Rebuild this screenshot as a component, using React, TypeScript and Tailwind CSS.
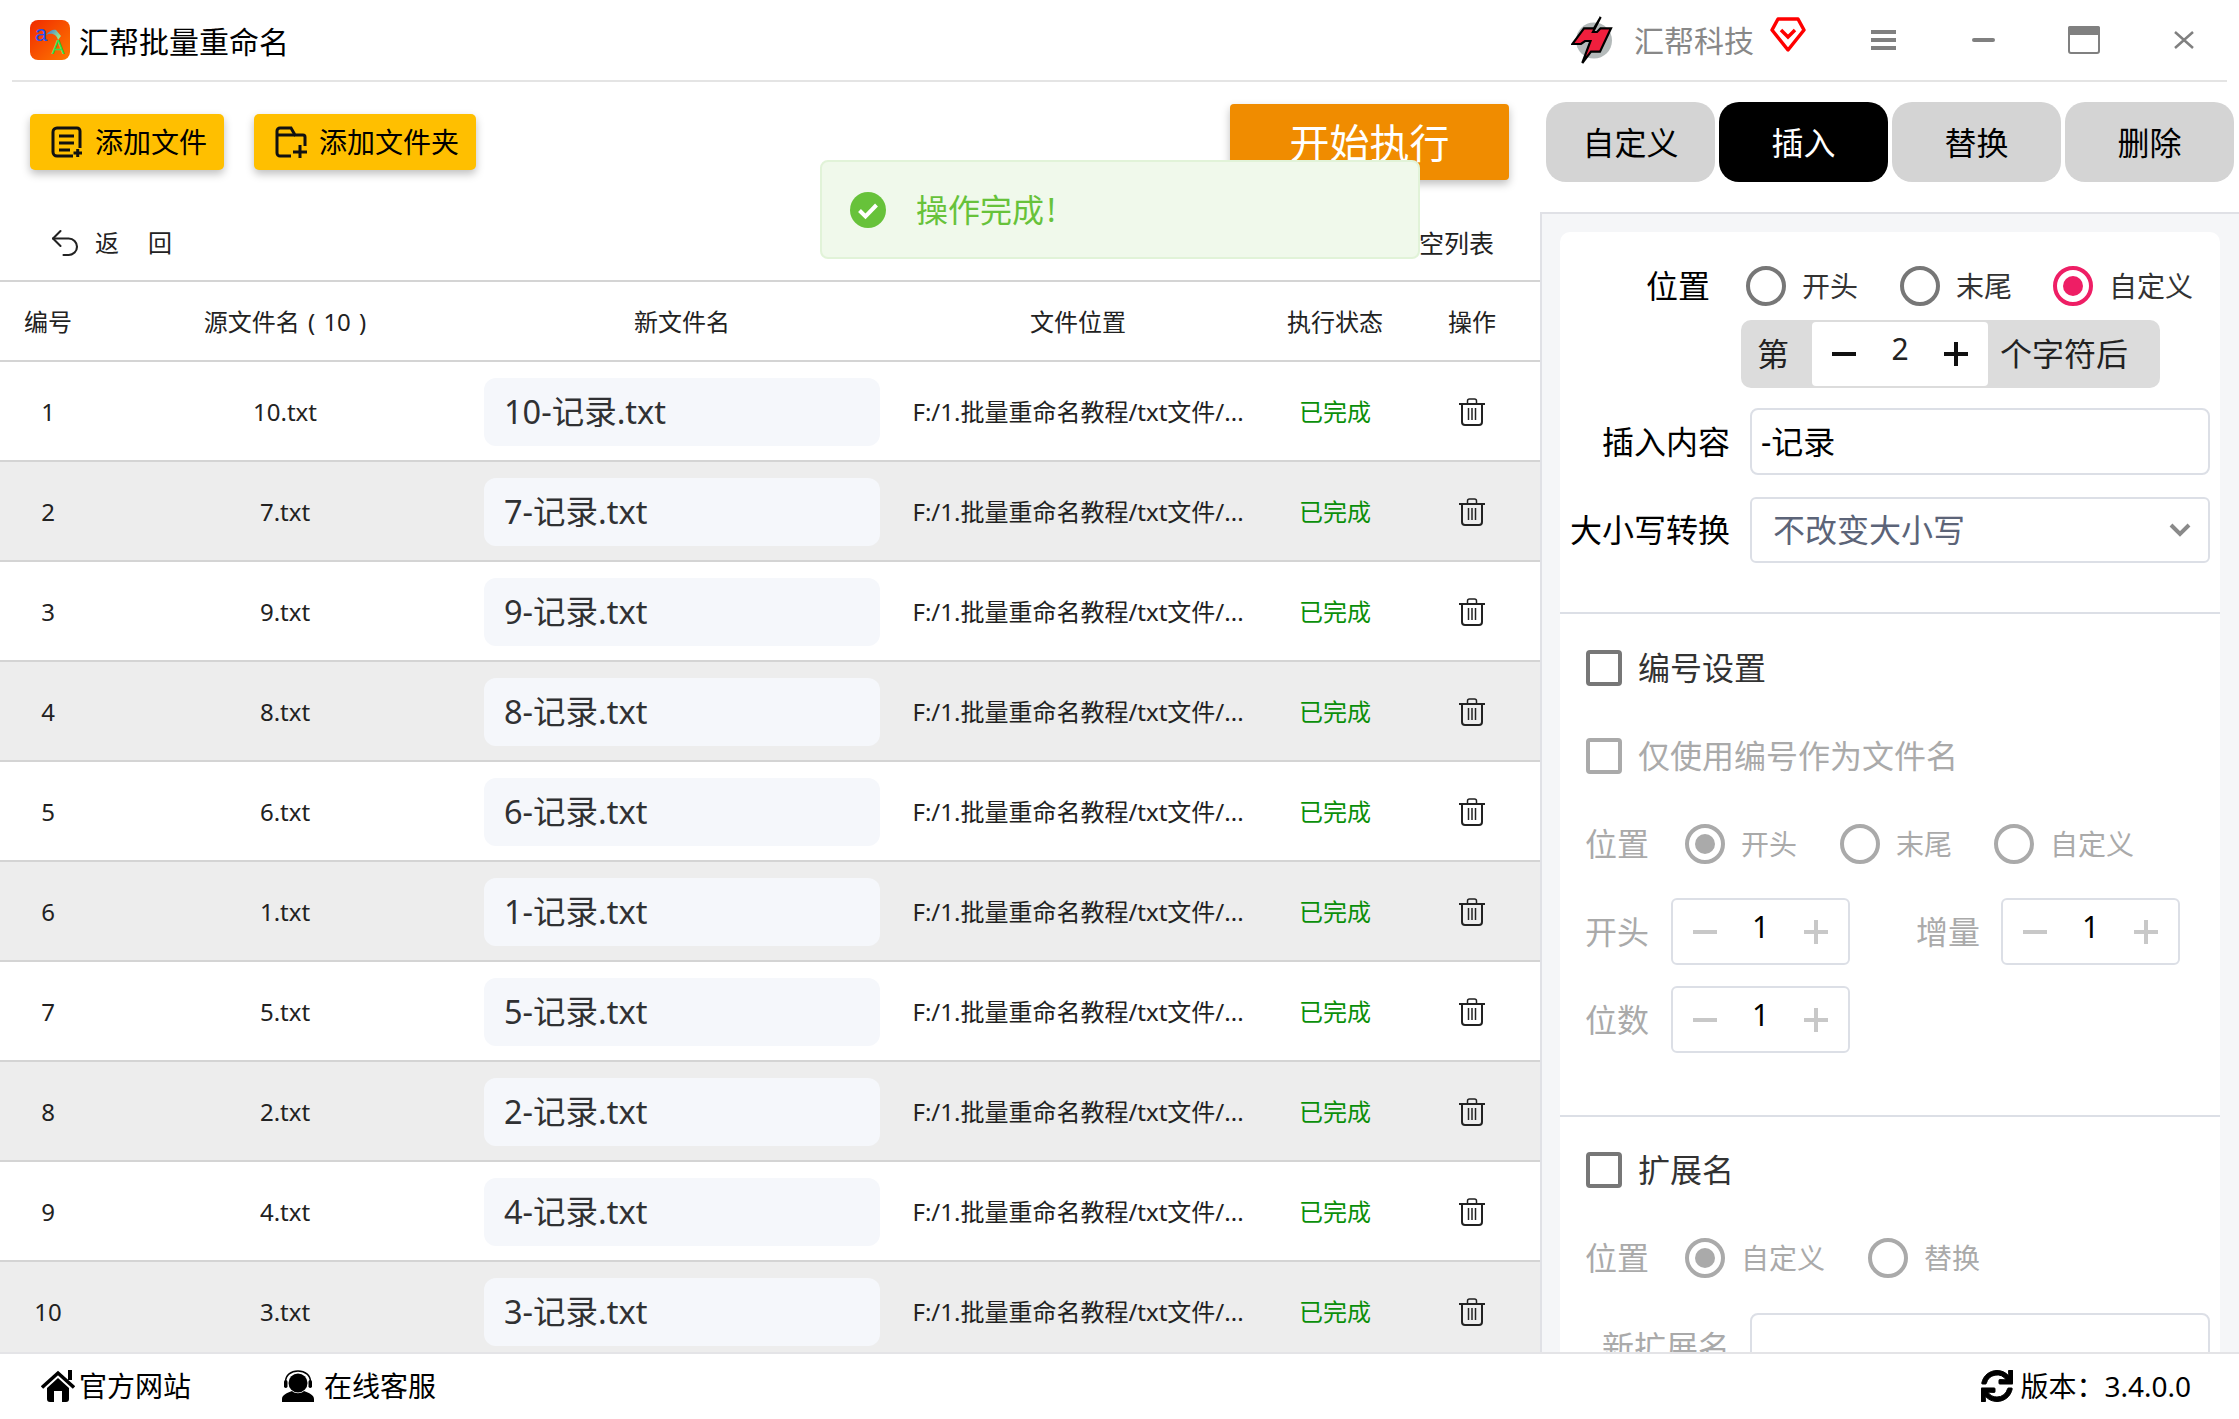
import { Undo2 } from 'lucide-react';
import { FaSync } from 'react-icons/fa';

const rows = [
    { no: 1, src: '10.txt', name: '10-记录.txt' },
    { no: 2, src: '7.txt', name: '7-记录.txt' },
    { no: 3, src: '9.txt', name: '9-记录.txt' },
    { no: 4, src: '8.txt', name: '8-记录.txt' },
    { no: 5, src: '6.txt', name: '6-记录.txt' },
    { no: 6, src: '1.txt', name: '1-记录.txt' },
    { no: 7, src: '5.txt', name: '5-记录.txt' },
    { no: 8, src: '2.txt', name: '2-记录.txt' },
    { no: 9, src: '4.txt', name: '4-记录.txt' },
    { no: 10, src: '3.txt', name: '3-记录.txt' },
];

function AppLogo() {
    return (
        <svg width="40" height="40" viewBox="0 0 40 40" className="shrink-0">
            <defs>
                <linearGradient id="appBg" x1="0" y1="0" x2="1" y2="1">
                    <stop offset="0" stopColor="#f02a00" />
                    <stop offset="1" stopColor="#ff7a00" />
                </linearGradient>
                <linearGradient id="appArrow" x1="0" y1="0" x2="1" y2="0.5">
                    <stop offset="0" stopColor="#3a6ee0" />
                    <stop offset="1" stopColor="#9ae88a" />
                </linearGradient>
            </defs>
            <rect width="40" height="40" rx="8" fill="url(#appBg)" />
            <text x="5" y="21" fontSize="22" fill="#2050f0" fontFamily="Liberation Sans, sans-serif">a</text>
            <text x="21.500" y="34" fontSize="19.500" fill="#30e050" fontFamily="Liberation Sans, sans-serif">A</text>
            <path d="M16 15C19 11 23 9 26 10L31 16L28 20C27 15 22 12 16 15Z" fill="url(#appArrow)" />
        </svg>
    );
}

function CompanyLogo() {
    return (
        <svg width="42" height="48" viewBox="0 0 42 48" className="shrink-0">
            <circle cx="23" cy="24.500" r="18" fill="#b4baba" />
            <path
                d="M29.700 1L22 16H26L29.500 12.300H40L29 35.700H20L11.300 47L15.500 35.700L19.500 25H14L10 28H1.300L13 12.300H23Z"
                fill="#f01f3d"
                stroke="#000"
                strokeWidth="2.200"
                strokeLinejoin="miter"
            />
        </svg>
    );
}

function ShieldIcon() {
    return (
        <svg width="36" height="36" viewBox="0 0 36 36" className="shrink-0 mb-[10px]">
            <path d="M8 2H28L34 13L18 33L2 13Z" fill="#fff" stroke="#ff0000" strokeWidth="3.500" strokeLinejoin="round" />
            <path d="M11 13L18 20L25 13" fill="none" stroke="#ff0000" strokeWidth="3.500" />
        </svg>
    );
}

function DocIcon() {
    return (
        <svg width="32" height="32" viewBox="0 0 32 32" fill="none" stroke="#111" strokeWidth="3" className="shrink-0">
            <path d="M22 30H6a4 4 0 0 1-4-4V6a4 4 0 0 1 4-4h20a3 3 0 0 1 3 3v17" />
            <path d="M8 10H23M8 17H23M8 24H19" />
            <path d="M22.500 27H31M26.700 23V31" />
        </svg>
    );
}

function FolderIcon() {
    return (
        <svg width="32" height="32" viewBox="0 0 32 32" fill="none" stroke="#111" strokeWidth="3" className="shrink-0">
            <path d="M16 30H5a3 3 0 0 1-3-3V5a3 3 0 0 1 3-3h11l4 7h8a2 2 0 0 1 2 2v9" />
            <path d="M2 9H20" />
            <path d="M18 26H32M25 19V32" />
        </svg>
    );
}

function TrashIcon() {
    return (
        <svg width="28" height="28" viewBox="0 0 28 28" fill="none" stroke="#222" strokeWidth="2" className="shrink-0">
            <path d="M1 6H27" />
            <path d="M9.500 5V3a2 2 0 0 1 2-2h5a2 2 0 0 1 2 2v2" strokeWidth="1.500" />
            <path d="M4 6V24a3 3 0 0 0 3 3H21a3 3 0 0 0 3-3V6" />
            <path d="M10.500 10V22M14 10V22M17.500 10V22" strokeWidth="1.500" />
        </svg>
    );
}

function HomeIcon() {
    return (
        <svg width="34" height="32" viewBox="0 0 34 32" className="shrink-0">
            <path d="M1 17.500L17 3L33 17.500" fill="none" stroke="#000" strokeWidth="3.500" />
            <rect x="27" y="0" width="4" height="10" fill="#000" />
            <path d="M6 18L17 8L28 18V29a3 3 0 0 1-3 3H21V21H13V32H9a3 3 0 0 1-3-3Z" fill="#000" />
        </svg>
    );
}

function HeadsetIcon() {
    return (
        <svg width="32" height="32" viewBox="0 0 32 32" className="shrink-0">
            <path d="M0 32V29C0 25 5 23 10 21C13 24 19 24 22 21C27 23 32 25 32 29V32Z" fill="#000" />
            <circle cx="16" cy="13" r="9.500" fill="#000" />
            <path d="M3.500 12C3.500 5 9 1 16 1s12.500 4 12.500 11" fill="none" stroke="#000" strokeWidth="1.500" />
            <rect x="2" y="10" width="3.500" height="8" rx="1.700" fill="#000" />
            <rect x="26.500" y="10" width="3.500" height="8" rx="1.700" fill="#000" />
        </svg>
    );
}

function CheckCircle() {
    return (
        <svg width="36" height="36" viewBox="0 0 36 36" className="shrink-0">
            <circle cx="18" cy="18" r="18" fill="#67c23a" />
            <path d="M9.500 18.500L15.500 24.500L26.500 13" fill="none" stroke="#fff" strokeWidth="4" />
        </svg>
    );
}

function Radio({ label, checked, disabled, className }: { label: string; checked?: boolean; disabled?: boolean; className?: string }) {
    const ring = disabled ? 'border-[#aaaaaa]' : checked ? 'border-[#ee1e65]' : 'border-[#777777]';
    const dot = disabled ? 'bg-[#aaaaaa]' : 'bg-[#ee1e65]';
    return (
        <div className={`flex items-center gap-[16px] ${className ?? ''}`}>
            <span className={`flex h-[40px] w-[40px] items-center justify-center rounded-full border-[4px] ${ring}`}>
                {checked && <span className={`h-[20px] w-[20px] rounded-full ${dot}`} />}
            </span>
            <span className={`text-[28px] leading-none ${disabled ? 'text-[#aaaaaa]' : 'text-[#333333]'}`}>{label}</span>
        </div>
    );
}

function Check({ label, disabled, className }: { label: string; disabled?: boolean; className?: string }) {
    return (
        <div className={`flex items-center gap-[16px] ml-[26px] ${className ?? ''}`}>
            <span className={`h-[36px] w-[36px] rounded-[4px] border-[4px] ${disabled ? 'border-[#aaaaaa]' : 'border-[#777777]'}`} />
            <span className={`text-[32px] leading-none ${disabled ? 'text-[#aaaaaa]' : 'text-[#333333]'}`}>{label}</span>
        </div>
    );
}

function Stepper({ value }: { value: number }) {
    return (
        <div className="flex h-[67px] w-[179px] items-center justify-between rounded-[6px] border-2 border-[#dcdfe6] px-[20px]">
            <svg width="24" height="4" viewBox="0 0 24 4"><rect width="24" height="4" fill="#c8c8c8" /></svg>
            <span className="mb-[10px] text-[30px] leading-none text-black">{value}</span>
            <svg width="24" height="24" viewBox="0 0 24 24"><path d="M0 10H24V14H0ZM10 0H14V24H10Z" fill="#c8c8c8" /></svg>
        </div>
    );
}

export default function App() {
    return (
        <div className="relative flex h-[1419px] w-full flex-col overflow-hidden bg-white font-['Noto_Sans','Noto_Sans_CJK_SC',sans-serif] text-[#222222]">
            {/* Title bar */}
            <header className="mx-[12px] flex h-[82px] shrink-0 items-center border-b-2 border-[#e4e4e4] pl-[18px] pr-[33px]">
                <AppLogo />
                <span className="ml-[9px] mt-[3px] text-[30px] leading-none text-black">汇帮批量重命名</span>
                <div className="ml-auto flex items-center">
                    <CompanyLogo />
                    <span className="ml-[21px] mt-[2px] text-[30px] leading-none text-[#888888]">汇帮科技</span>
                    <span className="ml-[16px]"><ShieldIcon /></span>
                    <svg width="25" height="20" viewBox="0 0 25 20" className="ml-[65px]">
                        <path d="M0 0H25V4H0ZM0 8H25V12H0ZM0 16H25V20H0Z" fill="#808080" />
                    </svg>
                    <svg width="23" height="4" viewBox="0 0 23 4" className="ml-[76px]">
                        <rect width="23" height="4" rx="2" fill="#808080" />
                    </svg>
                    <svg width="32" height="28" viewBox="0 0 32 28" className="ml-[73px]">
                        <rect x="1" y="1" width="30" height="26" rx="2" fill="none" stroke="#808080" strokeWidth="2" />
                        <rect width="32" height="9" rx="2" fill="#808080" />
                    </svg>
                    <svg width="20" height="18" viewBox="0 0 20 18" className="ml-[74px]">
                        <path d="M1 1L19 17M19 1L1 17" stroke="#808080" strokeWidth="2.500" fill="none" />
                    </svg>
                </div>
            </header>

            <main className="flex min-h-0 flex-1 overflow-hidden">
                {/* File list */}
                <section className="flex w-[1540px] shrink-0 flex-col overflow-hidden">
                    <div className="flex h-[200px] shrink-0 flex-col border-b-2 border-[#d4d4d4] pl-[30px] pr-[31px] pt-[22px]">
                        <div className="flex items-start">
                            <button className="mt-[10px] flex h-[56px] w-[194px] items-center gap-[12px] rounded-[5px] bg-[#ffbf00] pl-[21px] text-[28px] leading-none text-black shadow-[0_4px_8px_rgba(0,0,0,0.25)]">
                                <DocIcon />
                                添加文件
                            </button>
                            <button className="ml-[30px] mt-[10px] flex h-[56px] w-[222px] items-center gap-[12px] rounded-[5px] bg-[#ffbf00] pl-[21px] text-[28px] leading-none text-black shadow-[0_4px_8px_rgba(0,0,0,0.25)]">
                                <FolderIcon />
                                添加文件夹
                            </button>
                            <button className="ml-auto flex h-[76px] w-[279px] items-center justify-center rounded-[4px] bg-[#f08c00] pt-[2px] text-[40px] leading-none text-white shadow-[0_4px_8px_rgba(0,0,0,0.25)]">
                                开始执行
                            </button>
                        </div>
                        <div className="mt-[43px] flex h-[40px] items-center pl-[17px] pr-[15px] text-[24px] leading-none">
                            <Undo2 size={36} strokeWidth={1.4} className="shrink-0" />
                            <span className="ml-[12px]">返</span>
                            <span className="ml-[29px]">回</span>
                            <span className="ml-auto text-[25px]">清空列表</span>
                        </div>
                    </div>

                    <div className="grid h-[80px] shrink-0 grid-cols-[96px_378px_416px_376px_138px_136px] items-center border-b-2 border-[#d4d4d4] pt-[2px] text-center text-[24px] leading-none">
                        <span>编号</span>
                        <span className="[word-spacing:2px]">源文件名 ( 10 )</span>
                        <span>新文件名</span>
                        <span>文件位置</span>
                        <span>执行状态</span>
                        <span>操作</span>
                    </div>

                    {rows.map((row) => (
                        <div
                            key={row.no}
                            className={`grid h-[100px] shrink-0 grid-cols-[96px_378px_416px_376px_138px_136px] items-center border-b-2 border-[#d4d4d4] pt-[2px] text-center text-[24px] leading-none ${row.no % 2 === 0 ? 'bg-[#ededed]' : 'bg-white'}`}
                        >
                            <span>{row.no}</span>
                            <span>{row.src}</span>
                            <div className="mx-[10px] flex h-[68px] items-center rounded-[12px] bg-[#f5f7fb] pl-[20px] text-left text-[32.500px] text-[#303133]">
                                {row.name}
                            </div>
                            <span className="whitespace-nowrap">F:/1.批量重命名教程/txt文件/...</span>
                            <span className="text-[#0a8f0a]">已完成</span>
                            <span className="flex justify-center"><TrashIcon /></span>
                        </div>
                    ))}
                </section>

                {/* Settings */}
                <aside className="flex min-w-0 flex-1 flex-col pt-[20px]">
                    <div className="ml-[6px] mr-[5px] grid shrink-0 grid-cols-4 gap-[4px] text-[32px] leading-none">
                        <button className="h-[80px] rounded-[20px] bg-[#d4d4d4] pt-[2px] text-black">自定义</button>
                        <button className="h-[80px] rounded-[20px] bg-black pt-[2px] text-white">插入</button>
                        <button className="h-[80px] rounded-[20px] bg-[#d4d4d4] pt-[2px] text-black">替换</button>
                        <button className="h-[80px] rounded-[20px] bg-[#d4d4d4] pt-[2px] text-black">删除</button>
                    </div>

                    <div className="mt-[30px] min-h-0 flex-1 overflow-hidden border-l-2 border-t-2 border-[#e0e1e6] bg-[#f5f6f8] pl-[18px] pr-[19px] pt-[18px]">
                        <div className="rounded-t-[10px] bg-white pb-[40px] pt-[34px]">
                            <div className="flex items-center">
                                <span className="w-[150px] text-right text-[32px] leading-none text-black">位置</span>
                                <Radio label="开头" className="ml-[36px]" />
                                <Radio label="末尾" className="ml-[42px]" />
                                <Radio label="自定义" checked className="ml-[41px]" />
                            </div>
                            <div className="ml-[181px] mt-[14px] flex h-[68px] w-[419px] items-center rounded-[10px] bg-[#dcdcdc] text-[32px] leading-none">
                                <span className="ml-[16px] w-[55px]">第</span>
                                <div className="flex h-[64px] w-[176px] items-center justify-between rounded-[4px] bg-white px-[20px]">
                                    <svg width="24" height="4" viewBox="0 0 24 4"><rect width="24" height="4" fill="#111" /></svg>
                                    <span className="mb-[10px] text-[30px]">2</span>
                                    <svg width="24" height="24" viewBox="0 0 24 24"><path d="M0 10H24V14H0ZM10 0H14V24H10Z" fill="#111" /></svg>
                                </div>
                                <span className="ml-[12px]">个字符后</span>
                            </div>
                            <div className="mt-[20px] flex items-center">
                                <span className="w-[170px] text-right text-[32px] leading-none text-black">插入内容</span>
                                <div className="ml-[20px] flex h-[67px] w-[460px] items-center rounded-[8px] border-2 border-[#dcdfe6] pl-[9px] text-[32px] leading-none text-black">-记录</div>
                            </div>
                            <div className="mt-[22px] flex items-center">
                                <span className="w-[170px] whitespace-nowrap text-right text-[32px] leading-none text-black">大小写转换</span>
                                <div className="ml-[20px] flex h-[66px] w-[460px] items-center justify-between rounded-[6px] border-2 border-[#dcdfe6] pl-[21px] pr-[17px] text-[32px] leading-none text-[#5c6478]">
                                    不改变大小写
                                    <svg width="22" height="14" viewBox="0 0 22 14"><path d="M2 2L11 11L20 2" fill="none" stroke="#8a8a8a" strokeWidth="4" /></svg>
                                </div>
                            </div>

                            <div className="mt-[49px] h-[2px] bg-[#dcdfe6]" />

                            <Check label="编号设置" className="mt-[36px]" />
                            <Check label="仅使用编号作为文件名" disabled className="mt-[52px]" />
                            <div className="ml-[25px] mt-[50px] flex items-center">
                                <span className="w-[64px] text-[32px] leading-none text-[#aaaaaa]">位置</span>
                                <Radio label="开头" checked disabled className="ml-[36px]" />
                                <Radio label="末尾" disabled className="ml-[43px]" />
                                <Radio label="自定义" disabled className="ml-[42px]" />
                            </div>
                            <div className="ml-[25px] mt-[34px] flex items-center">
                                <span className="w-[64px] text-[32px] leading-none text-[#aaaaaa]">开头</span>
                                <span className="ml-[22px]"><Stepper value={1} /></span>
                                <span className="ml-[66px] w-[64px] text-[32px] leading-none text-[#aaaaaa]">增量</span>
                                <span className="ml-[21px]"><Stepper value={1} /></span>
                            </div>
                            <div className="ml-[25px] mt-[21px] flex items-center">
                                <span className="w-[64px] text-[32px] leading-none text-[#aaaaaa]">位数</span>
                                <span className="ml-[22px]"><Stepper value={1} /></span>
                            </div>

                            <div className="mt-[62px] h-[2px] bg-[#dcdfe6]" />

                            <Check label="扩展名" className="mt-[35px]" />
                            <div className="ml-[25px] mt-[50px] flex items-center">
                                <span className="w-[64px] text-[32px] leading-none text-[#aaaaaa]">位置</span>
                                <Radio label="自定义" checked disabled className="ml-[36px]" />
                                <Radio label="替换" disabled className="ml-[43px]" />
                            </div>
                            <div className="mt-[35px] flex items-center">
                                <span className="w-[170px] text-right text-[32px] leading-none text-[#aaaaaa]">新扩展名</span>
                                <div className="ml-[20px] h-[67px] w-[460px] rounded-[8px] border-2 border-[#dcdfe6]" />
                            </div>
                        </div>
                    </div>
                </aside>
            </main>

            {/* Footer */}
            <footer className="z-10 flex h-[67px] shrink-0 items-center border-t-2 border-[#e4e4e7] bg-white pb-[2px] pl-[41px] pr-[48px] text-[28px] leading-none text-black">
                <HomeIcon />
                <span className="ml-[4px]">官方网站</span>
                <span className="ml-[91px]"><HeadsetIcon /></span>
                <span className="ml-[10px]">在线客服</span>
                <FaSync size={32} stroke="currentColor" strokeWidth={16} className="ml-auto shrink-0" />
                <span className="ml-[7px]">版本：</span>
                <span>3.4.0.0</span>
            </footer>

            {/* Toast */}
            <div className="absolute left-[820px] top-[160px] z-20 flex h-[99px] w-[600px] items-center rounded-[8px] border-2 border-[#e1f3d8] bg-[#f0f9eb] pl-[28px] text-[32px] leading-none text-[#67c23a]">
                <CheckCircle />
                <span className="ml-[30px]">操作完成<span className="ml-[3px]">!</span></span>
            </div>
        </div>
    );
}
